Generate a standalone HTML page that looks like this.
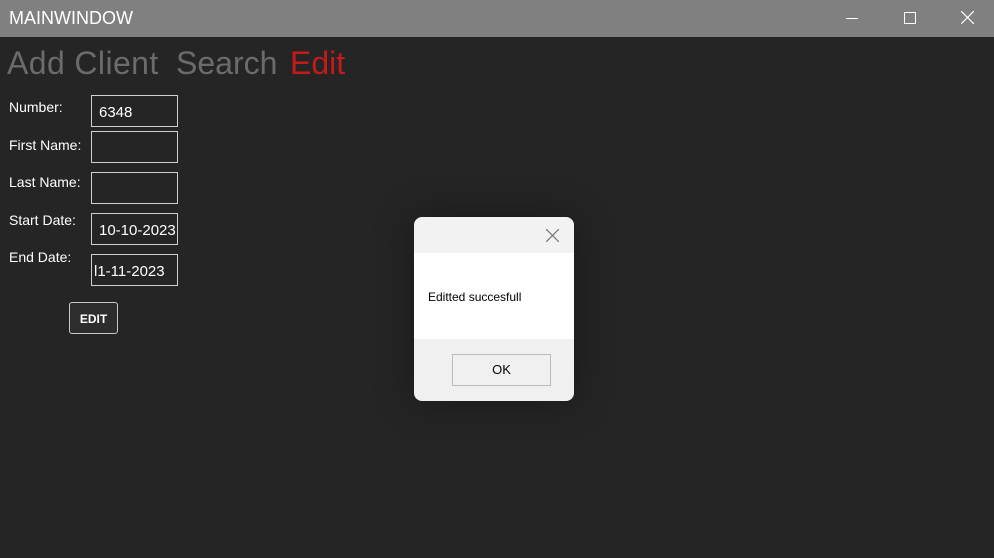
<!DOCTYPE html>
<html><head><style>
body{margin:0;width:994px;height:558px;background:#252525;font-family:"Liberation Sans",sans-serif;position:relative;overflow:hidden}
.a{position:absolute}
.tb{position:absolute;left:91px;width:85px;height:30px;border:1px solid #d0d0d0;color:#fff;font-size:15px;line-height:33px;overflow:hidden;white-space:nowrap}
.lb{position:absolute;left:9px;color:#fff;font-size:14px}
</style></head><body>
<div class="a" style="left:0;top:0;width:994px;height:37px;background:#808080"></div>
<div class="a" style="left:9px;top:8px;color:#fff;font-size:18px">MAINWINDOW</div>
<div class="a" style="left:846px;top:18px;width:12px;height:1px;background:#fff"></div>
<div class="a" style="left:904px;top:12px;width:10px;height:10px;border:1px solid #fff"></div>
<svg class="a" style="left:961px;top:11px" width="13" height="13"><path d="M0 0L13 13M13 0L0 13" stroke="#fff" stroke-width="1.2"/></svg>
<div class="a" style="left:7px;top:45px;font-size:32px;color:#6b6b6b;letter-spacing:.4px">Add Client</div>
<div class="a" style="left:176px;top:45px;font-size:32px;color:#6b6b6b">Search</div>
<div class="a" style="left:290px;top:45px;font-size:32px;color:#c41a1a">Edit</div>
<div class="lb" style="top:99px">Number:</div>
<div class="lb" style="top:137px">First Name:</div>
<div class="lb" style="top:174px">Last Name:</div>
<div class="lb" style="top:212px">Start Date:</div>
<div class="lb" style="top:249px">End Date:</div>
<div class="tb" style="top:95px;padding-left:7px;width:78px">6348</div>
<div class="tb" style="top:131px"></div>
<div class="tb" style="top:172px"></div>
<div class="tb" style="top:213px;padding-left:7px;width:78px">10-10-2023</div>
<div class="tb" style="top:254px;text-indent:2px">l1-11-2023</div>
<div class="a" style="left:69px;top:302px;width:47px;height:30px;border:1px solid #c8c8c8;border-radius:3px;background:#2d2d2d;color:#fff;font-weight:bold;font-size:12px;text-align:center;line-height:32px">EDIT</div>
<div class="a" style="left:414px;top:217px;width:160px;height:184px;border-radius:8px;overflow:hidden;box-shadow:0 0 40px rgba(0,0,0,.35)">
<div style="height:36px;background:#f3f2f3;position:relative"><svg style="position:absolute;left:132px;top:12px" width="13" height="13"><path d="M0 0L13 13M13 0L0 13" stroke="#777" stroke-width="1.2"/></svg></div>
<div style="height:86px;background:#fff;position:relative"><div style="position:absolute;left:14px;top:37px;font-size:12px;color:#000">Editted succesfull</div></div>
<div style="height:62px;background:#f0f0f0;position:relative"><div style="position:absolute;left:38px;top:15px;width:97px;height:30px;border:1px solid #bbb;background:#f0f0f0;font-size:13px;text-align:center;line-height:30px">OK</div></div>
</div>
</body></html>
